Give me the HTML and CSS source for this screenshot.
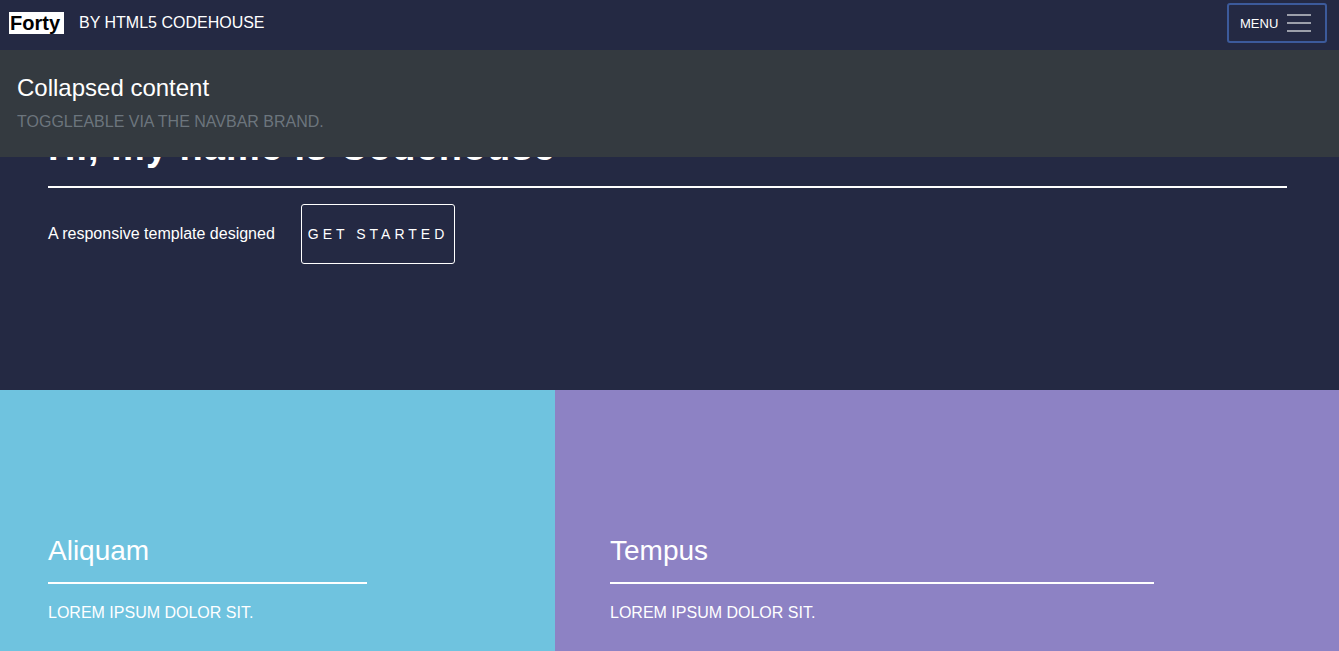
FILE: index.html
```html
<!DOCTYPE html>
<html lang="en">
<head>
<meta charset="utf-8">
<title>Forty by HTML5 Codehouse</title>
<link rel="stylesheet" href="styles.css">
</head>
<body>
<header class="navbar">
  <div class="brand-group">
    <a class="brand" href="#">Forty</a>
    <span class="by">BY HTML5 CODEHOUSE</span>
  </div>
  <button class="toggler" type="button">
    <span class="menu-label">MENU</span>
    <svg class="burger" width="24" height="18" viewBox="0 0 24 18" aria-hidden="true">
      <rect x="0" y="0" width="24" height="2" fill="#9c9faa"/>
      <rect x="0" y="8" width="24" height="2" fill="#9c9faa"/>
      <rect x="0" y="16" width="24" height="2" fill="#9c9faa"/>
    </svg>
  </button>
</header>

<div class="collapse-panel">
  <h4 class="collapse-title">Collapsed content</h4>
  <p class="collapse-text">TOGGLEABLE VIA THE NAVBAR BRAND.</p>
</div>

<section class="hero">
  <h1 class="hero-title">Hi, my name is Codehouse</h1>
  <div class="rule"></div>
  <div class="hero-row">
    <p class="hero-text">A responsive template designed</p>
    <a class="btn" href="#">GET STARTED</a>
  </div>
</section>

<section class="tiles">
  <article class="tile tile-blue">
    <h3 class="tile-title">Aliquam</h3>
    <div class="rule"></div>
    <p class="tile-text">LOREM IPSUM DOLOR SIT.</p>
  </article>
  <article class="tile tile-purple">
    <h3 class="tile-title">Tempus</h3>
    <div class="rule"></div>
    <p class="tile-text">LOREM IPSUM DOLOR SIT.</p>
  </article>
</section>
</body>
</html>
```

FILE: styles.css
```css
* { box-sizing: border-box; }

html, body {
  margin: 0;
  padding: 0;
  background: #242943;
  color: #fff;
  font-family: "Liberation Sans", Arial, sans-serif;
  overflow: hidden;
}

.navbar {
  height: 50px;
  padding: 3px 12px 7px 9px;
  display: flex;
  align-items: center;
  justify-content: space-between;
  background: #242943;
}

.brand-group {
  display: flex;
  align-items: center;
}

.brand {
  display: inline-block;
  height: 22px;
  line-height: 22px;
  padding: 0 4px 0 1px;
  background: #fff;
  color: #000;
  font-size: 20px;
  font-weight: bold;
  text-decoration: none;
}

.by {
  margin-left: 15px;
  font-size: 16px;
  color: #fff;
}

.toggler {
  width: 100px;
  height: 40px;
  display: flex;
  align-items: center;
  padding: 0 0 0 11px;
  background: transparent;
  border: 2px solid #3c5a9a;
  border-radius: 3px;
  color: #fff;
  font-family: "Liberation Sans", Arial, sans-serif;
  cursor: pointer;
}

.menu-label {
  font-size: 13px;
  line-height: 1;
  margin-top: 1px;
}

.burger {
  margin-left: 9px;
  display: block;
}

.collapse-panel {
  position: absolute;
  top: 50px;
  left: 0;
  right: 0;
  height: 107px;
  padding: 24px 17px 0;
  background: #343a40;
  z-index: 5;
}

.collapse-title {
  margin: 0 0 7px;
  font-size: 24px;
  font-weight: normal;
  line-height: 1.2;
  color: #fff;
}

.collapse-text {
  margin: 0;
  font-size: 16px;
  line-height: 1.5;
  color: #6c757d;
}

.hero {
  height: 340px;
  padding: 75px 52px 0 48px;
  background: #242943;
}

.hero-title {
  margin: 0;
  font-size: 38px;
  line-height: 1.2;
  font-weight: bold;
  letter-spacing: 1px;
}

.rule {
  height: 2px;
  background: #fff;
}

.hero .rule {
  margin-top: 15px;
}

.hero-row {
  margin-top: 16px;
  display: flex;
  align-items: center;
}

.hero-text {
  margin: 0;
  font-size: 16px;
  line-height: 1.5;
}

.btn {
  margin-left: 26px;
  height: 60px;
  display: flex;
  align-items: center;
  padding: 0 6px 0 6px;
  border: 1px solid #fff;
  border-radius: 3px;
  color: #fff;
  font-size: 14px;
  letter-spacing: 4px;
  text-decoration: none;
}

.tiles {
  display: grid;
  grid-template-columns: 555px 1fr;
}

.tile {
  height: 300px;
  padding-top: 144px;
}

.tile-blue {
  background: #6fc3df;
  padding-left: 48px;
  padding-right: 188px;
}

.tile-purple {
  background: #8d82c4;
  padding-left: 55px;
  padding-right: 185px;
}

.tile-title {
  margin: 0;
  font-size: 28px;
  font-weight: normal;
  line-height: 1.2;
}

.tile .rule {
  margin-top: 14px;
}

.tile-text {
  margin: 17px 0 0;
  font-size: 16px;
  line-height: 1.5;
}
```
